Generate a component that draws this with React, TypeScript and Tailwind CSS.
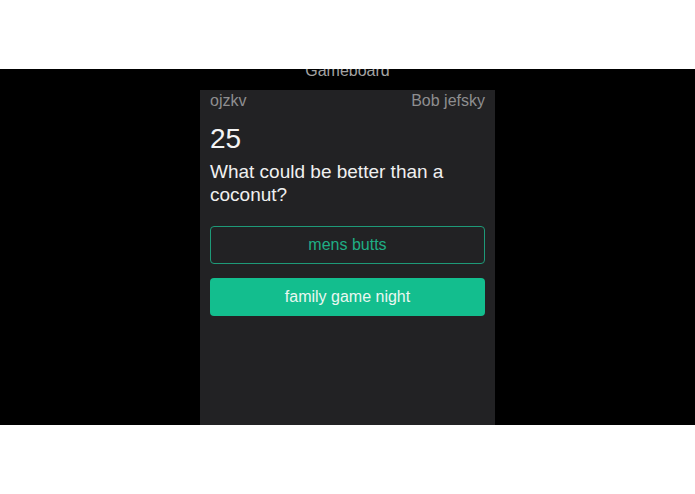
export default function App() {
  return (
    <div className="w-[695px] h-[494px] bg-white flex flex-col font-['Liberation_Sans',Arial,sans-serif]">
      <div className="h-[69px] shrink-0" />
      <div className="h-[356px] bg-black overflow-hidden flex flex-col items-center">
        <div className="h-[21px] w-full flex justify-center">
          <span className="text-[16px] leading-none text-[#a3a3a3] -mt-[6px]">Gameboard</span>
        </div>
        <div className="w-[295px] flex-1 bg-[#222224] px-[10px] flex flex-col">
          <div className="flex justify-between text-[16px] text-[#8e8e90] pt-[2px] leading-[18px]">
            <span>ojzkv</span>
            <span>Bob jefsky</span>
          </div>
          <div className="text-[28px] text-[#f4f4f4] mt-[13px] leading-[32px]">25</div>
          <div className="text-[19px] text-[#f0f0f0] mt-[5px] leading-[23px] pr-[30px]">
            What could be better than a coconut?
          </div>
          <button className="mt-[20px] h-[38px] w-full rounded-[4px] border-[1.5px] border-[#1e9a78] text-[#1fae85] text-[16px]">
            mens butts
          </button>
          <button className="mt-[14px] h-[38px] w-full rounded-[4px] bg-[#13be8e] text-[#eaf7f1] text-[16px]">
            family game night
          </button>
        </div>
      </div>
    </div>
  )
}
